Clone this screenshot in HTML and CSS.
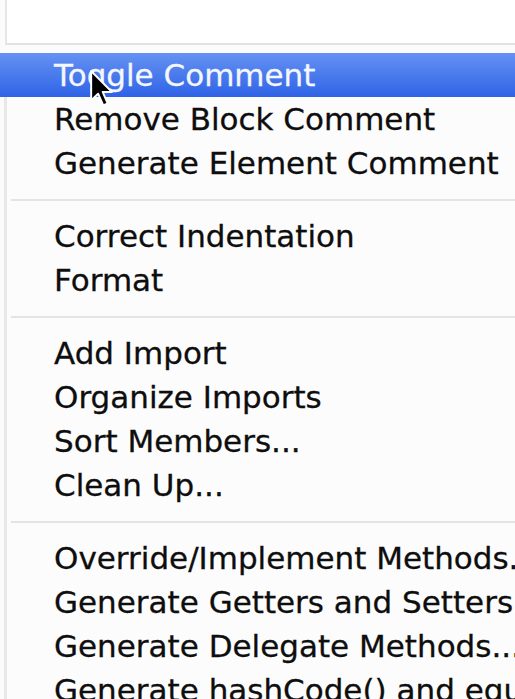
FILE: index.html
```html
<!DOCTYPE html>
<html>
<head>
<meta charset="utf-8">
<link rel="stylesheet" href="styles.css">
</head>
<body>
<div class="screen">
  <div class="topbox"></div>
  <div class="menu">
    <div class="item active">Toggle Comment</div>
    <div class="item">Remove Block Comment</div>
    <div class="item">Generate Element Comment</div>
    <div class="sep"></div>
    <div class="item">Correct Indentation</div>
    <div class="item">Format</div>
    <div class="sep"></div>
    <div class="item">Add Import</div>
    <div class="item">Organize Imports</div>
    <div class="item">Sort Members...</div>
    <div class="item">Clean Up...</div>
    <div class="sep"></div>
    <div class="item">Override/Implement Methods...</div>
    <div class="item">Generate Getters and Setters...</div>
    <div class="item">Generate Delegate Methods...</div>
    <div class="item">Generate hashCode() and equals()...</div>
  </div>
  <svg class="cursor" width="26" height="39" viewBox="0 0 12 18">
    <path d="M1 1 L1 14.5 L4.2 11.4 L6.6 16.8 L8.6 15.9 L6.3 10.6 L10.6 10.6 Z" fill="#000" stroke="#fff" stroke-width="0.9" stroke-linejoin="round"/>
  </svg>
</div>
</body>
</html>
```
FILE: styles.css
```css
html, body {
  margin: 0;
  padding: 0;
  width: 515px;
  height: 699px;
  overflow: hidden;
  background: #fbfbfb;
}
.screen {
  position: relative;
  width: 515px;
  height: 699px;
  overflow: hidden;
  font-family: "DejaVu Sans", "Liberation Sans", sans-serif;
}
.topbox {
  height: 43px;
  margin-left: 5px;
  background: #fff;
  border-left: 2px solid #e6e6e6;
  border-bottom: 2px solid #e2e2e2;
}
.menu {
  margin-top: 8px;
  border-left: 3px solid #e8e8e8;
  margin-left: 4px;
  background: #fcfcfc;
}
.item {
  height: 44px;
  line-height: 44px;
  padding-left: 47px;
  font-size: 31px;
  color: #0e0e0e;
  white-space: nowrap;
  -webkit-text-stroke: 0.3px #0e0e0e;
}
.item.active {
  margin-left: -7px;
  padding-left: 54px;
  background: linear-gradient(#6592f3, #2f63e6);
  color: #f4f7ff;
  -webkit-text-stroke: 0.3px #f4f7ff;
}
.sep {
  height: 29px;
  display: flex;
  align-items: center;
}
.sep::before {
  content: "";
  flex: 1;
  margin-left: 4px;
  height: 2px;
  background: #e4e4e4;
}
.cursor {
  position: absolute;
  left: 89px;
  top: 69px;
}
```
